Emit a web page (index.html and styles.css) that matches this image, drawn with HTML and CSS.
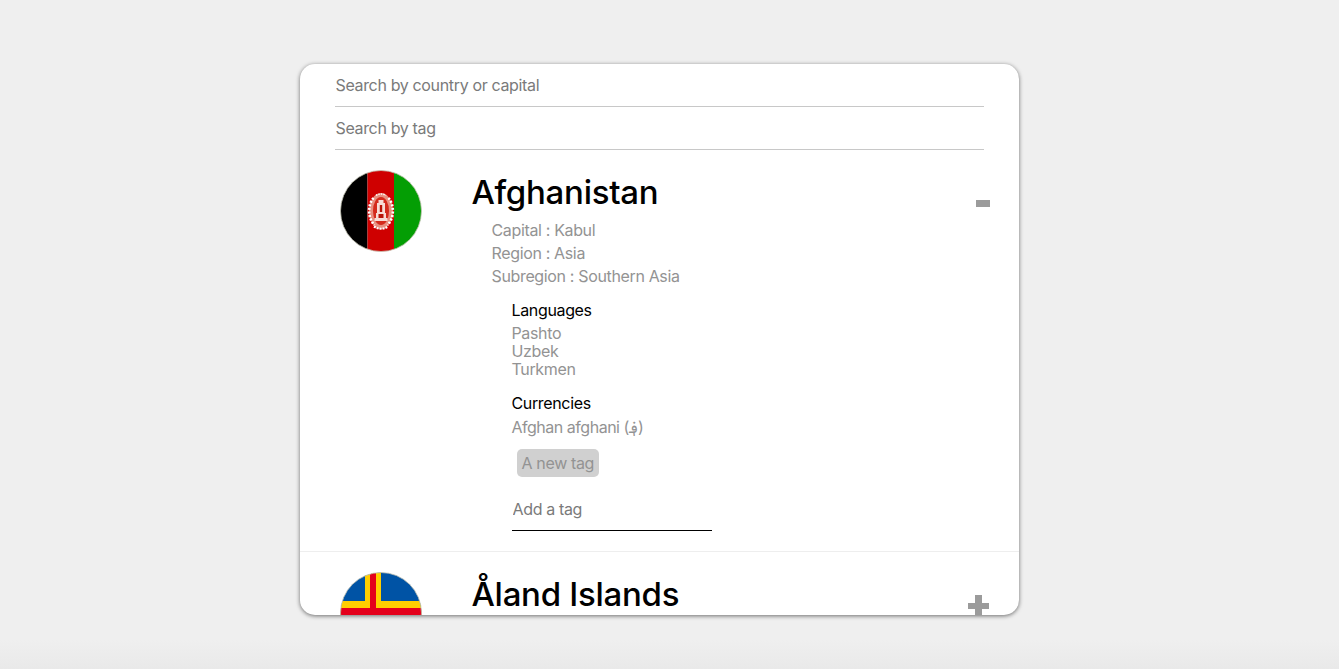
FILE: index.html
```html
<!DOCTYPE html>
<html lang="en">
<head>
<meta charset="utf-8">
<title>Countries</title>
<link rel="stylesheet" href="styles.css">
</head>
<body>
<main class="card">
  <div class="searches">
    <input class="search" type="text" placeholder="Search by country or capital">
    <input class="search" type="text" placeholder="Search by tag">
  </div>
  <article class="country country-open">
    <svg class="flag" viewBox="0 0 82 82">
      <defs><clipPath id="af"><circle cx="41" cy="41" r="40.5"/></clipPath></defs>
      <g clip-path="url(#af)">
        <rect width="27.5" height="82" fill="#000"/>
        <rect x="27.5" width="26.5" height="82" fill="#cf0000"/>
        <rect x="54" width="28" height="82" fill="#049e04"/>
        <ellipse cx="41" cy="41" rx="12" ry="18" fill="#e88f80"/>
        <ellipse cx="41" cy="41" rx="8" ry="14" fill="#d42a1c"/>
        <g fill="none" stroke="#fff">
          <path d="M33.500 28c-6 7-6 20 1 27M48.500 28c6 7 6 20-1 27" stroke-width="2.600" stroke-dasharray="2 1.600"/>
          <path d="M34 56.500c4.500 3 9.500 3 14 0" stroke-width="2.200" stroke-dasharray="2 1"/>
          <path d="M36 25.500c3-2 7-2 10 0" stroke-width="1.400" stroke-dasharray="1.500 1"/>
        </g>
        <path d="M38.500 30h5v3h1.500v10h1v5h1.500v3H34.500v-3H36v-5h1V33h1.500z" fill="#f7dcd6"/>
        <path d="M39.800 35h2.400v7h-2.400zM38.500 44h5v4h-5z" fill="#b81408"/>
      </g>
      <circle cx="41" cy="41" r="40.500" fill="none" stroke="#c4c4b4" stroke-width=".8"/>
    </svg>
    <div class="info">
      <h2 class="name">Afghanistan</h2>
      <div class="facts">
        <p>Capital : Kabul</p>
        <p>Region : Asia</p>
        <p>Subregion : Southern Asia</p>
      </div>
      <section class="group group-languages">
        <h3 class="group-title">Languages</h3>
        <p>Pashto</p>
        <p>Uzbek</p>
        <p>Turkmen</p>
      </section>
      <section class="group group-currencies">
        <h3 class="group-title">Currencies</h3>
        <p class="currency">Afghan afghani (؋)</p>
      </section>
      <span class="tag">A new tag</span>
      <input class="tag-input" type="text" placeholder="Add a tag">
    </div>
    <svg class="toggle" viewBox="0 0 22 22"><rect x="8" y="7" width="14" height="7" fill="#9b9b9b"/></svg>
  </article>
  <article class="country">
    <svg class="flag" viewBox="0 0 82 82">
      <defs><clipPath id="ax"><circle cx="41" cy="41" r="40.5"/></clipPath></defs>
      <g clip-path="url(#ax)">
        <rect width="82" height="82" fill="#0053a5"/>
        <rect x="25" width="16" height="82" fill="#ffce00"/>
        <rect y="29" width="82" height="24" fill="#ffce00"/>
        <rect x="30" width="6" height="82" fill="#e4001b"/>
        <rect y="36" width="82" height="10" fill="#e4001b"/>
      </g>
      <circle cx="41" cy="41" r="40.500" fill="none" stroke="#c4c4b4" stroke-width=".8"/>
    </svg>
    <div class="info">
      <h2 class="name">Åland Islands</h2>
    </div>
    <svg class="toggle" viewBox="0 0 22 22"><path d="M7 0h7v8h7v6h-7v8H7v-8H0V8h7z" fill="#9b9b9b"/></svg>
  </article>
</main>
</body>
</html>
```
FILE: styles.css
```css
* { box-sizing: border-box; }
html, body { height: 100%; }
body {
  margin: 0;
  overflow: hidden;
  padding-top: 64px;
  background: linear-gradient(#efefef 0, #efefef 640px, #e9e9e9 669px);
  font-family: Inter, "Noto Sans", "DejaVu Sans", sans-serif;
  font-size: 16px;
  color: #939393;
}
p, h2, h3 { margin: 0; font-weight: 400; }
.card {
  width: 719px;
  height: 551px;
  margin-left: 300px;
  background: #fff;
  border-radius: 15px;
  box-shadow: 0 1px 4px rgba(0,0,0,.55);
  overflow: hidden;
}
.searches {
  display: flex;
  flex-direction: column;
  padding: 0 35px;
}
input {
  display: block;
  border: 0;
  outline: 0;
  background: transparent;
  font: inherit;
  letter-spacing: -.35px;
  color: #333;
}
input::placeholder { color: #7a7a7a; opacity: 1; }
.search {
  width: 100%;
  height: 43px;
  padding: 0 .5px;
  border-bottom: 1px solid #c8c8c8;
}
.country {
  display: flex;
  align-items: flex-start;
  padding: 20px 29px 20px 40px;
}
.country-open {
  padding-bottom: 20px;
  border-bottom: 1px solid #eee;
  height: 402px;
}
.flag { width: 82px; height: 82px; flex: none; }
.info {
  flex: 1;
  margin-left: 49.500px;
  display: flex;
  flex-direction: column;
  align-items: flex-start;
  letter-spacing: -.35px;
}
.name {
  font-size: 33px;
  font-weight: 500;
  line-height: 44px;
  color: #000;
  letter-spacing: -.28px;
}
.facts { margin: 5px 0 0 20px; line-height: 23px; }
.group { margin-left: 40px; line-height: 18px; }
.group-languages { margin-top: 10px; }
.group-currencies { margin-top: 13px; }
.group-title {
  font-size: 16px;
  color: #000;
  line-height: 24px;
  margin-bottom: 2px;
}
.currency { line-height: 20px; letter-spacing: -.48px; }
.tag {
  margin: 12px 0 0 45px;
  padding: 0 5px;
  height: 28px;
  line-height: 29px;
  background: #d0d0d0;
  border-radius: 5px;
}
.tag-input {
  width: 200px;
  height: 43px;
  margin: 11px 0 0 40px;
  padding: 0 1px;
  border-bottom: 1px solid #000;
}
.toggle { width: 22px; height: 22px; flex: none; margin-top: 23px; }
```
